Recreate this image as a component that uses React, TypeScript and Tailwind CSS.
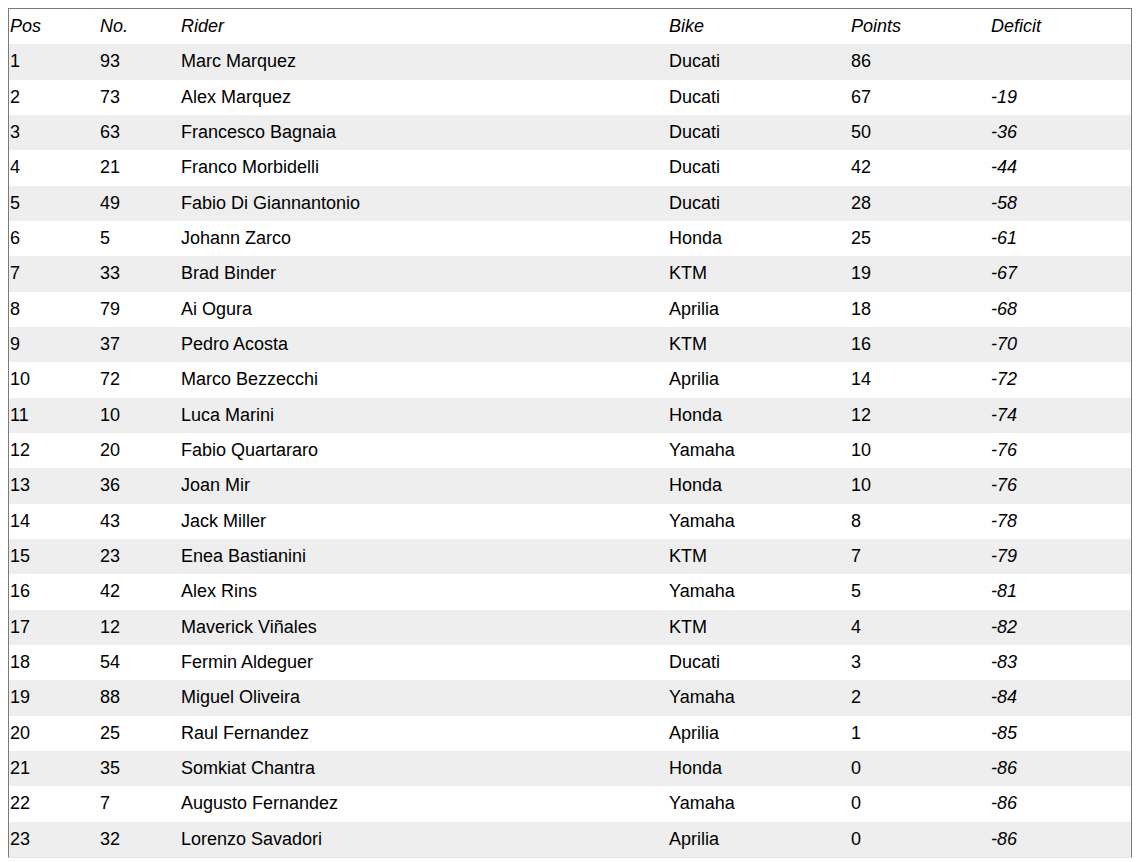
import React from 'react'

const riders: [number, number, string, string, number, string][] = [
  [1, 93, 'Marc Marquez', 'Ducati', 86, ''],
  [2, 73, 'Alex Marquez', 'Ducati', 67, '-19'],
  [3, 63, 'Francesco Bagnaia', 'Ducati', 50, '-36'],
  [4, 21, 'Franco Morbidelli', 'Ducati', 42, '-44'],
  [5, 49, 'Fabio Di Giannantonio', 'Ducati', 28, '-58'],
  [6, 5, 'Johann Zarco', 'Honda', 25, '-61'],
  [7, 33, 'Brad Binder', 'KTM', 19, '-67'],
  [8, 79, 'Ai Ogura', 'Aprilia', 18, '-68'],
  [9, 37, 'Pedro Acosta', 'KTM', 16, '-70'],
  [10, 72, 'Marco Bezzecchi', 'Aprilia', 14, '-72'],
  [11, 10, 'Luca Marini', 'Honda', 12, '-74'],
  [12, 20, 'Fabio Quartararo', 'Yamaha', 10, '-76'],
  [13, 36, 'Joan Mir', 'Honda', 10, '-76'],
  [14, 43, 'Jack Miller', 'Yamaha', 8, '-78'],
  [15, 23, 'Enea Bastianini', 'KTM', 7, '-79'],
  [16, 42, 'Alex Rins', 'Yamaha', 5, '-81'],
  [17, 12, 'Maverick Viñales', 'KTM', 4, '-82'],
  [18, 54, 'Fermin Aldeguer', 'Ducati', 3, '-83'],
  [19, 88, 'Miguel Oliveira', 'Yamaha', 2, '-84'],
  [20, 25, 'Raul Fernandez', 'Aprilia', 1, '-85'],
  [21, 35, 'Somkiat Chantra', 'Honda', 0, '-86'],
  [22, 7, 'Augusto Fernandez', 'Yamaha', 0, '-86'],
  [23, 32, 'Lorenzo Savadori', 'Aprilia', 0, '-86'],
]

const cols = 'grid grid-cols-[90px_81px_488px_182px_140px_1fr] items-center h-[35.33px]'

const App = () => {
  return (
    <div className="bg-white min-h-screen pt-2 pl-2 pr-[6px] text-[18px] text-black font-['Liberation_Sans',Arial,sans-serif]">
      <div className="border border-[#7a7a7a] border-b-[#e6e6e6]">
        <div className={cols + ' italic'}>
          <div className="pl-px">Pos</div>
          <div className="pl-px">No.</div>
          <div className="pl-px">Rider</div>
          <div className="pl-px">Bike</div>
          <div className="pl-px">Points</div>
          <div className="pl-px">Deficit</div>
        </div>
        {riders.map((r, i) => (
          <div key={r[0]} className={cols + (i % 2 === 0 ? ' bg-[#eeeeee]' : ' bg-white')}>
            <div className="pl-px">{r[0]}</div>
            <div className="pl-px">{r[1]}</div>
            <div className="pl-px">{r[2]}</div>
            <div className="pl-px">{r[3]}</div>
            <div className="pl-px">{r[4]}</div>
            <div className="pl-px italic">{r[5]}</div>
          </div>
        ))}
      </div>
    </div>
  )
}

export default App
